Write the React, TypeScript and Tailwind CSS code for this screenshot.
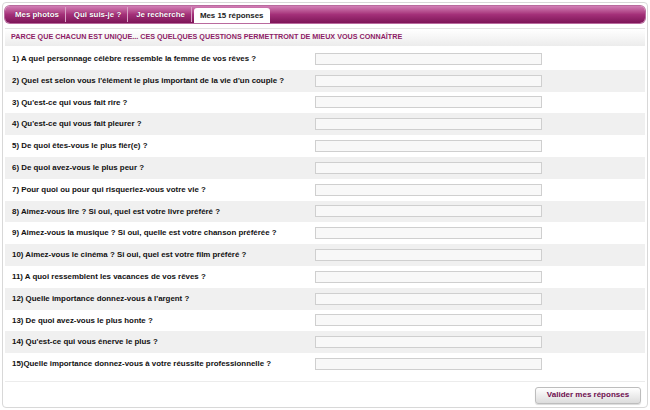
import React from 'react';

const questions = [
  "1) A quel personnage célèbre ressemble la femme de vos rêves ?",
  "2) Quel est selon vous l'élément le plus important de la vie d'un couple ?",
  "3) Qu'est-ce qui vous fait rire ?",
  "4) Qu'est-ce qui vous fait pleurer ?",
  "5) De quoi êtes-vous le plus fièr(e) ?",
  "6) De quoi avez-vous le plus peur ?",
  "7) Pour quoi ou pour qui risqueriez-vous votre vie ?",
  "8) Aimez-vous lire ? Si oui, quel est votre livre préféré ?",
  "9) Aimez-vous la musique ? Si oui, quelle est votre chanson préférée ?",
  "10) Aimez-vous le cinéma ? Si oui, quel est votre film préféré ?",
  "11) A quoi ressemblent les vacances de vos rêves ?",
  "12) Quelle importance donnez-vous à l'argent ?",
  "13) De quoi avez-vous le plus honte ?",
  "14) Qu'est-ce qui vous énerve le plus ?",
  "15)Quelle importance donnez-vous à votre réussite professionnelle ?",
];

const tabs = ['Mes photos', 'Qui suis-je ?', 'Je recherche'];

export default function App() {
  return (
    <div className="w-[650px] h-[410px] bg-white p-[2px] font-['Liberation_Sans',Arial,sans-serif]">
      <div className="h-full border border-[#d8d8d8] rounded-[4px] px-[2px] pt-[3px] flex flex-col">
        {/* barre d'onglets */}
        <div className="h-[17px] rounded-[5px] bg-gradient-to-b from-[#d27fb6] via-[#a43079] to-[#7d1558] flex items-end pl-[4px] gap-[2px] shadow-[0_0_0_1px_#b96a9e]">
          {tabs.map(t => (
            <div key={t} className="h-[15px] px-[6px] flex items-center text-white text-[7.9px] font-bold border-r border-[#d9a3c6] [text-shadow:0_0_1px_#5a0a3e] mb-[1px]">
              {t}
            </div>
          ))}
          <div className="h-[15px] px-[6px] bg-white rounded-t-[3px] flex items-center text-[#222] text-[7.9px] font-bold">
            Mes 15 réponses
          </div>
        </div>

        {/* bandeau */}
        <div className="mt-[5px] h-[18px] border-t border-[#e2e2e2] bg-gradient-to-b from-white to-[#ececec] flex items-center pl-[6px] text-[7.2px] font-bold text-[#8e1c66]">
          PARCE QUE CHACUN EST UNIQUE... CES QUELQUES QUESTIONS PERMETTRONT DE MIEUX VOUS CONNAÎTRE
        </div>

        {/* questions */}
        <div className="mt-[2px] flex flex-col">
          {questions.map((q, i) => (
            <div key={i} className={`h-[21.8px] flex items-center ${i % 2 ? 'bg-[#f0f0f0]' : 'bg-white'}`}>
              <div className="w-[310px] pl-[7px] text-[7.9px] font-bold text-[#111] whitespace-nowrap">{q}</div>
              <input type="text" className="w-[227px] h-[12px] bg-[#f8f8f8] border border-[#cfcfcf] outline-none" />
            </div>
          ))}
        </div>

        <div className="mt-[6px] border-t border-[#ececec] flex justify-end pr-[4px] pt-[5px]">
          <button className="w-[106px] h-[17px] rounded-[3px] border border-[#bdbdbd] bg-gradient-to-b from-white to-[#dcdcdc] text-[8px] font-bold text-[#6e0d4f] shadow-[0_1px_1px_rgba(0,0,0,0.15)]">
            Valider mes réponses
          </button>
        </div>
      </div>
    </div>
  );
}
